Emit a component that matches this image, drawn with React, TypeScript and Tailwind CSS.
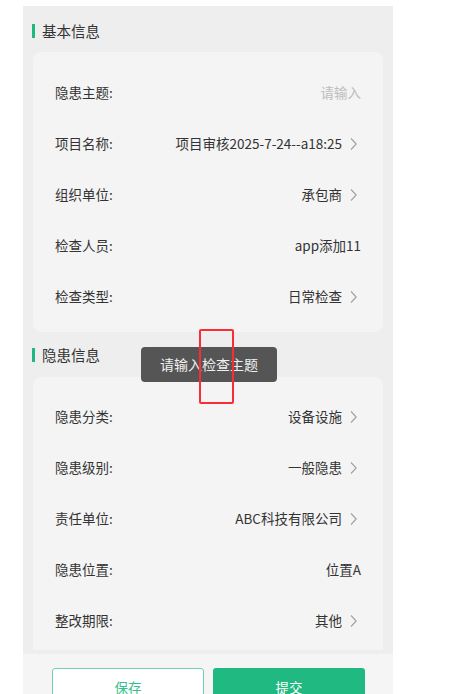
import React from 'react';

const basicRows = [
  { label: '隐患主题:', value: '请输入', placeholder: true, arrow: false },
  { label: '项目名称:', value: '项目审核2025-7-24--a18:25', arrow: true },
  { label: '组织单位:', value: '承包商', arrow: true },
  { label: '检查人员:', value: 'app添加11', arrow: false },
  { label: '检查类型:', value: '日常检查', arrow: true },
];

const hazardRows = [
  { label: '隐患分类:', value: '设备设施', arrow: true },
  { label: '隐患级别:', value: '一般隐患', arrow: true },
  { label: '责任单位:', value: 'ABC科技有限公司', arrow: true },
  { label: '隐患位置:', value: '位置A', arrow: false },
  { label: '整改期限:', value: '其他', arrow: true },
];

type Row = { label: string; value: string; placeholder?: boolean; arrow: boolean };

const Chevron = () => (
  <svg width="7" height="12" viewBox="0 0 7 12" className="ml-[8px] mr-[4px] shrink-0">
    <path d="M1 0.5 L6.2 6 L1 11.5" fill="none" stroke="#a0a0a0" strokeWidth="1.1" />
  </svg>
);

const SectionTitle = ({ title, className }: { title: string; className: string }) => (
  <div className={`flex items-center pl-[9px] ${className}`}>
    <span className="block w-[3px] h-[14px] bg-[#21b77f]"></span>
    <span className="ml-[7px] text-[14.5px] text-[#333]">{title}</span>
  </div>
);

const FormCard = ({ rows, className }: { rows: Row[]; className: string }) => (
  <div className={`mx-[10px] rounded-[8px] bg-[#f4f4f4] px-[22px] ${className}`}>
    {rows.map((row) => (
      <div key={row.label} className="flex h-[51px] items-center justify-between text-[13.5px]">
        <span className="text-[#333]">{row.label}</span>
        <div className="flex items-center">
          <span className={row.placeholder ? 'text-[#bdbdbd]' : 'text-[#333]'}>{row.value}</span>
          {row.arrow && <Chevron />}
        </div>
      </div>
    ))}
  </div>
);

export default function App() {
  return (
    <div
      className="relative w-[465px] h-[694px] bg-white overflow-hidden"
      style={{ fontFamily: '"Noto Sans CJK SC", "Noto Sans", sans-serif' }}
    >
      <div className="ml-[23px] mt-[6px] w-[370px] h-[688px] bg-[#eeeeee] flex flex-col overflow-hidden">
        {/* scroll area */}
        <div className="h-[644px] shrink-0 overflow-hidden">
          <SectionTitle title="基本信息" className="h-[46px] pt-[4px]" />
          <FormCard rows={basicRows} className="pt-[15px] pb-[10px]" />
          <SectionTitle title="隐患信息" className="h-[45px]" />
          <FormCard rows={hazardRows} className="pt-[14px] pb-[10px]" />
        </div>

        {/* footer */}
        <div className="mt-[4px] shrink-0 h-[60px] bg-[#f5f5f5] flex gap-[9px] pl-[29px] pt-[14px]">
          <button className="w-[152px] h-[38px] rounded-[3px] border border-[#6fd3b0] bg-white text-[13.5px] text-[#35bf8c]">
            保存
          </button>
          <button className="w-[152px] h-[38px] rounded-[3px] bg-[#1fb981] text-[13.5px] text-white">
            提交
          </button>
        </div>
      </div>

      {/* toast */}
      <div className="absolute left-[141px] top-[347px] w-[136px] h-[35px] rounded-[4px] bg-[#555555] flex items-center justify-center text-[14px] text-[#f0f0f0]">
        请输入检查主题
      </div>

      {/* annotation box */}
      <div className="absolute left-[199px] top-[329px] w-[35px] h-[75px] rounded-[2px] border-2 border-red-500"></div>
    </div>
  );
}
